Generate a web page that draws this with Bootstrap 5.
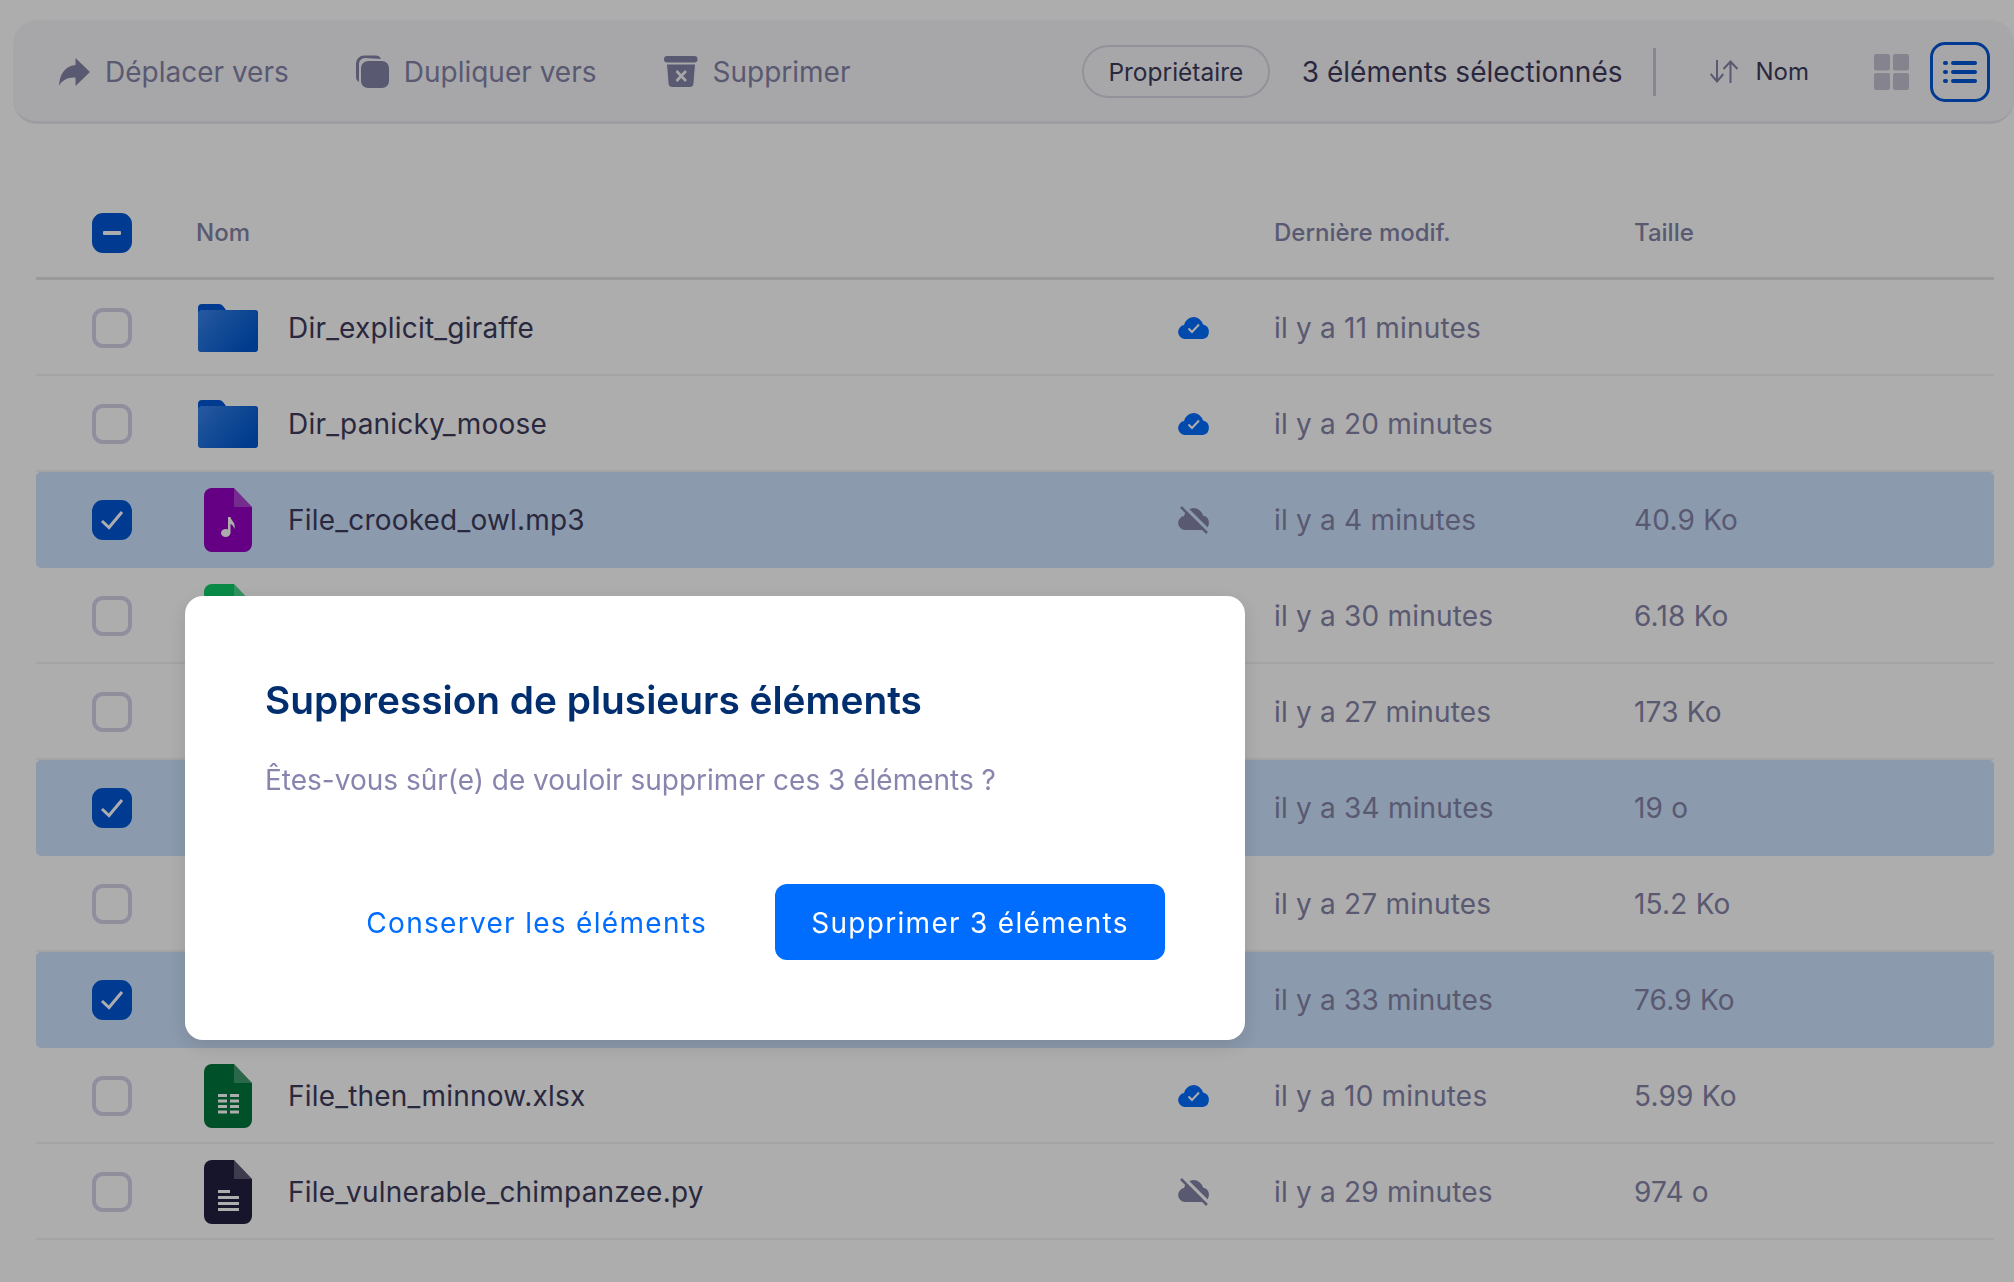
<!DOCTYPE html>
<html lang="fr">
<head>
  <meta charset="UTF-8" />
  <meta name="viewport" content="width=device-width, initial-scale=1.0" />
  <title>Drive - Suppression</title>
  <link href="https://cdn.jsdelivr.net/npm/bootstrap@5.3.0/dist/css/bootstrap.min.css" rel="stylesheet" />
  <style>
    body {
      font-family: "Inter", "Liberation Sans", sans-serif;
      font-size: 28px;
      color: #3e3c5c;
      background: #fff;
      overflow: hidden;
    }
    .toolbar {
      height: 104px;
      margin: 20px 0 0 13px;
      padding: 2px 24px 0 46px;
      background: #f7f7fa;
      border-bottom: 3px solid #e8e8ee;
      border-radius: 24px;
      color: #8583a8;
    }
    .tool-item { display: flex; align-items: center; gap: 15px; }
    .tool-item + .tool-item { margin-left: 67px; }
    .btn.pill {
      height: 53px;
      width: 188px;
      padding: 1px 0 0;
      font-size: 24.500px;
      color: #3e3c5c;
      border: 2px solid #d8d7e4;
      border-radius: 27px;
      background: transparent;
    }
    .sel-count { margin-left: 32px; margin-right: 30px; color: #3e3c5c; }
    .v-sep { width: 3px; height: 48px; background: #c9c8d6; margin-right: 54px; }
    .sort-name { font-size: 24px; color: #3e3c5c; margin-left: 18px; margin-right: 65px; }
    .btn.list-btn {
      width: 60px;
      height: 60px;
      padding: 0;
      margin-left: 21px;
      border: 3px solid #0058d6;
      border-radius: 15px;
      background: transparent;
    }
    .file-list { margin: 64px 20px 0 36px; }
    .list-head {
      height: 92px;
      font-size: 24px;
      font-weight: 500;
      color: #8583a8;
      border-bottom: 3px solid #e4e4e7;
    }
    .list-row {
      height: 96px;
      padding-top: 2px;
      letter-spacing: .2px;
      border-bottom: 2px solid #f2f2f4;
    }
    .list-row.selected {
      background: #cde3ff;
      border-bottom-color: #cde3ff;
      border-radius: 5px;
    }
    .col-check { width: 160px; padding-left: 56px; flex: none; }
    .col-name { flex: 1; min-width: 0; display: flex; align-items: center; }
    .col-cloud { width: 96px; flex: none; display: flex; }
    .col-date { width: 360px; flex: none; color: #8583a8; }
    .col-size { width: 360px; flex: none; color: #8583a8; }
    .file-ico { width: 64px; flex: none; display: flex; justify-content: center; margin-right: 28px; }
    .tick {
      width: 40px;
      height: 40px;
      display: flex;
      align-items: center;
      justify-content: center;
      border: 4px solid #d2d1e7;
      border-radius: 11px;
    }
    .tick.on { background: #0058d6; border-color: #0058d6; }
    .modal-backdrop { --bs-backdrop-opacity: .32; }
    .modal-dialog.del-dialog {
      width: 1060px;
      max-width: none;
      margin: 596px 0 0 185px;
    }
    .del-box {
      height: 444px;
      padding: 80px;
      border: 0;
      border-radius: 18px;
      box-shadow: 0 6px 20px rgba(0, 0, 0, .12);
      color: #8785ae;
    }
    .del-title { font-size: 38.800px; font-weight: 600; color: #002e6e; line-height: 52px; margin: -2px 0 0; }
    .del-text { font-size: 28px; margin: 34px 0 0; line-height: 40px; }
    .del-actions { margin-top: auto; display: flex; justify-content: flex-end; align-items: center; }
    .btn.keep { color: #006dff; font-size: 28px; letter-spacing: 1.300px; padding: 1px 0 0; margin-right: 68px; border: 0; }
    .btn.remove {
      width: 390px;
      height: 76px;
      padding: 1px 0 0;
      color: #fff;
      font-size: 28px;
      letter-spacing: 1.300px;
      background: #006dff;
      border: 0;
      border-radius: 12px;
    }
  </style>
</head>
<body>
  <svg width="0" height="0" class="position-absolute">
    <defs>
      <linearGradient id="folderGrad" x1="0" y1="0" x2="1" y2="0.6">
        <stop offset="0" stop-color="#3a84ea" />
        <stop offset="1" stop-color="#0058d0" />
      </linearGradient>
      <mask id="slashGap" maskUnits="userSpaceOnUse" x="0" y="0" width="32" height="28">
        <rect width="32" height="28" fill="#fff" />
        <path d="M6 1 32 27" stroke="#000" stroke-width="4.500" />
      </mask>
    </defs>
    <symbol id="i-folder" viewBox="0 0 60 48">
      <path d="M0 4a4 4 0 0 1 4-4h17a5 5 0 0 1 4 2l3 4h29a3 3 0 0 1 3 3v10H0Z" fill="#0058d6" />
      <path d="M0 10a4 4 0 0 1 4-4h52a4 4 0 0 1 4 4v35a3 3 0 0 1-3 3H3a3 3 0 0 1-3-3Z" fill="url(#folderGrad)" />
    </symbol>
    <symbol id="i-file" viewBox="0 0 48 64">
      <path d="M8 0h22l18 19v37a8 8 0 0 1-8 8H8a8 8 0 0 1-8-8V8a8 8 0 0 1 8-8Z" fill="currentColor" />
      <path d="M30 0l18 19H30Z" fill="#fff" fill-opacity=".25" />
    </symbol>
    <symbol id="i-cloud" viewBox="0 0 32 22">
      <path d="M7 22a7 7 0 0 1-1-13.900A11 11 0 0 1 15.500 0a10 10 0 0 1 9.500 7.500A7.400 7.400 0 0 1 25 22Z" fill="#006dff" />
      <path d="M10.500 11.500l3.500 3.500 7-7.500" fill="none" stroke="#fff" stroke-width="2" />
    </symbol>
    <symbol id="i-cloud-off" viewBox="0 0 32 28">
      <g mask="url(#slashGap)">
        <path transform="translate(0 2)" d="M7 22a7 7 0 0 1-1-13.900A11 11 0 0 1 15.500 0a10 10 0 0 1 9.500 7.500A7.400 7.400 0 0 1 25 22Z" fill="#8583a8" />
      </g>
      <path d="M3 1 29 27" stroke="#8583a8" stroke-width="2.500" />
    </symbol>
  </svg>

  <div class="toolbar d-flex align-items-center">
    <div class="tool-item">
      <svg width="31" height="28" viewBox="0 0 31 28" fill="#8583a8"><path d="M16.500 0 31 14 16.500 28v-8.500C9 19 3 22 0 28 .5 16 6 8 16.500 7Z" /></svg>
      <span>Déplacer vers</span>
    </div>
    <div class="tool-item">
      <svg width="33" height="33" viewBox="0 0 33 33" fill="#8583a8">
        <rect x="5" y="6" width="28" height="27" rx="7" />
        <path d="M25 4C24 1.500 22 .5 20 .5H8A8 8 0 0 0 0 8v14c0 2 1 4 3 5V9a6 6 0 0 1 6-6Z" />
      </svg>
      <span>Dupliquer vers</span>
    </div>
    <div class="tool-item">
      <svg width="34" height="31" viewBox="0 0 34 31" fill="#8583a8">
        <rect width="33.500" height="6.500" rx="3.200" />
        <path d="M3 8.500h28L29.500 27a4 4 0 0 1-4 4h-17a4 4 0 0 1-4-4Z" />
        <path d="M12.500 15l9.500 10m0-10-9.500 10" stroke="#f7f7fa" stroke-width="2.600" />
      </svg>
      <span>Supprimer</span>
    </div>
    <div class="ms-auto d-flex align-items-center">
      <button class="btn pill" type="button">Propriétaire</button>
      <span class="sel-count">3 éléments sélectionnés</span>
      <div class="v-sep"></div>
      <svg width="28" height="23" viewBox="0 0 28 23" fill="none" stroke="#8583a8" stroke-width="2">
        <path d="M7 0v21.500M.7 14l6.300 7.500L13.300 14" />
        <path d="M20.500 23V1.500M13.500 9l7-7.500 7 7.500" />
      </svg>
      <span class="sort-name">Nom</span>
      <svg width="35" height="36" viewBox="0 0 35 36" fill="#c4c2d2">
        <rect width="16" height="16.500" rx="2" />
        <rect x="19" width="16" height="16.500" rx="2" />
        <rect y="19" width="16" height="17" rx="2" />
        <rect x="19" y="19" width="16" height="17" rx="2" />
      </svg>
      <button class="btn list-btn d-flex align-items-center justify-content-center" type="button" aria-label="Liste">
        <svg width="34" height="22" viewBox="0 0 34 22" fill="#0058d6">
          <rect width="5" height="4" rx="2" /><rect x="8" width="26" height="4" rx="2" />
          <rect y="9" width="5" height="4" rx="2" /><rect x="8" y="9" width="26" height="4" rx="2" />
          <rect y="18" width="5" height="4" rx="2" /><rect x="8" y="18" width="26" height="4" rx="2" />
        </svg>
      </button>
    </div>
  </div>

  <div class="file-list">
    <div class="list-head d-flex align-items-center">
      <div class="col-check"><span class="tick on"><svg width="18" height="4" viewBox="0 0 18 4"><rect width="18" height="4" rx="1" fill="#fff" /></svg></span></div>
      <div class="col-name">Nom</div>
      <div class="col-cloud"></div>
      <div class="col-date">Dernière modif.</div>
      <div class="col-size">Taille</div>
    </div>

    <div class="list-row d-flex align-items-center">
      <div class="col-check"><span class="tick"></span></div>
      <div class="col-name"><span class="file-ico"><svg width="60" height="48"><use href="#i-folder" /></svg></span>Dir_explicit_giraffe</div>
      <div class="col-cloud"><svg width="32" height="22"><use href="#i-cloud" /></svg></div>
      <div class="col-date">il y a 11 minutes</div>
      <div class="col-size"></div>
    </div>
    <div class="list-row d-flex align-items-center">
      <div class="col-check"><span class="tick"></span></div>
      <div class="col-name"><span class="file-ico"><svg width="60" height="48"><use href="#i-folder" /></svg></span>Dir_panicky_moose</div>
      <div class="col-cloud"><svg width="32" height="22"><use href="#i-cloud" /></svg></div>
      <div class="col-date">il y a 20 minutes</div>
      <div class="col-size"></div>
    </div>
    <div class="list-row selected d-flex align-items-center">
      <div class="col-check"><span class="tick on"><svg width="24" height="20" viewBox="0 0 24 20" fill="none" stroke="#fff" stroke-width="3"><path d="M2 11l7 6.500L22 2" /></svg></span></div>
      <div class="col-name"><span class="file-ico"><svg width="48" height="64" style="color:#9500c5"><use href="#i-file" /><ellipse cx="21.700" cy="45" rx="4.700" ry="4" fill="#fff" /><path d="M24 29h2.500c.5 4 5.500 5 4 12-1-3-2.500-4.500-4-5v9H24Z" fill="#fff" /></svg></span>File_crooked_owl.mp3</div>
      <div class="col-cloud"><svg width="32" height="28"><use href="#i-cloud-off" /></svg></div>
      <div class="col-date">il y a 4 minutes</div>
      <div class="col-size">40.9 Ko</div>
    </div>
    <div class="list-row d-flex align-items-center">
      <div class="col-check"><span class="tick"></span></div>
      <div class="col-name"><span class="file-ico"><svg width="48" height="64" style="color:#0dcc68"><use href="#i-file" /></svg></span></div>
      <div class="col-cloud"></div>
      <div class="col-date">il y a 30 minutes</div>
      <div class="col-size">6.18 Ko</div>
    </div>
    <div class="list-row d-flex align-items-center">
      <div class="col-check"><span class="tick"></span></div>
      <div class="col-name"></div>
      <div class="col-cloud"></div>
      <div class="col-date">il y a 27 minutes</div>
      <div class="col-size">173 Ko</div>
    </div>
    <div class="list-row selected d-flex align-items-center">
      <div class="col-check"><span class="tick on"><svg width="24" height="20" viewBox="0 0 24 20" fill="none" stroke="#fff" stroke-width="3"><path d="M2 11l7 6.500L22 2" /></svg></span></div>
      <div class="col-name"></div>
      <div class="col-cloud"></div>
      <div class="col-date">il y a 34 minutes</div>
      <div class="col-size">19 o</div>
    </div>
    <div class="list-row d-flex align-items-center">
      <div class="col-check"><span class="tick"></span></div>
      <div class="col-name"></div>
      <div class="col-cloud"></div>
      <div class="col-date">il y a 27 minutes</div>
      <div class="col-size">15.2 Ko</div>
    </div>
    <div class="list-row selected d-flex align-items-center">
      <div class="col-check"><span class="tick on"><svg width="24" height="20" viewBox="0 0 24 20" fill="none" stroke="#fff" stroke-width="3"><path d="M2 11l7 6.500L22 2" /></svg></span></div>
      <div class="col-name"></div>
      <div class="col-cloud"></div>
      <div class="col-date">il y a 33 minutes</div>
      <div class="col-size">76.9 Ko</div>
    </div>
    <div class="list-row d-flex align-items-center">
      <div class="col-check"><span class="tick"></span></div>
      <div class="col-name"><span class="file-ico"><svg width="48" height="64" style="color:#00773e"><use href="#i-file" /><path d="M14 30h9v3h-9Zm12 0h9v3h-9ZM14 35.500h9v3h-9Zm12 0h9v3h-9ZM14 41h9v3h-9Zm12 0h9v3h-9ZM14 46.500h9v3h-9Zm12 0h9v3h-9Z" fill="#fff" /></svg></span>File_then_minnow.xlsx</div>
      <div class="col-cloud"><svg width="32" height="22"><use href="#i-cloud" /></svg></div>
      <div class="col-date">il y a 10 minutes</div>
      <div class="col-size">5.99 Ko</div>
    </div>
    <div class="list-row d-flex align-items-center">
      <div class="col-check"><span class="tick"></span></div>
      <div class="col-name"><span class="file-ico"><svg width="48" height="64" style="color:#232040"><use href="#i-file" /><path d="M14 30h12v3H14Zm0 6h21v3H14Zm0 6h21v3H14Zm0 6h21v3H14Z" fill="#fff" /></svg></span>File_vulnerable_chimpanzee.py</div>
      <div class="col-cloud"><svg width="32" height="28"><use href="#i-cloud-off" /></svg></div>
      <div class="col-date">il y a 29 minutes</div>
      <div class="col-size">974 o</div>
    </div>
  </div>

  <div class="modal-backdrop show"></div>
  <div class="modal d-block" tabindex="-1">
    <div class="modal-dialog del-dialog">
      <div class="modal-content del-box">
        <h2 class="del-title">Suppression de plusieurs éléments</h2>
        <p class="del-text">Êtes-vous sûr(e) de vouloir supprimer ces 3 éléments ?</p>
        <div class="del-actions">
          <button class="btn keep" type="button">Conserver les éléments</button>
          <button class="btn remove" type="button">Supprimer 3 éléments</button>
        </div>
      </div>
    </div>
  </div>
  <script src="https://cdn.jsdelivr.net/npm/bootstrap@5.3.0/dist/js/bootstrap.bundle.min.js"></script>
</body>
</html>
